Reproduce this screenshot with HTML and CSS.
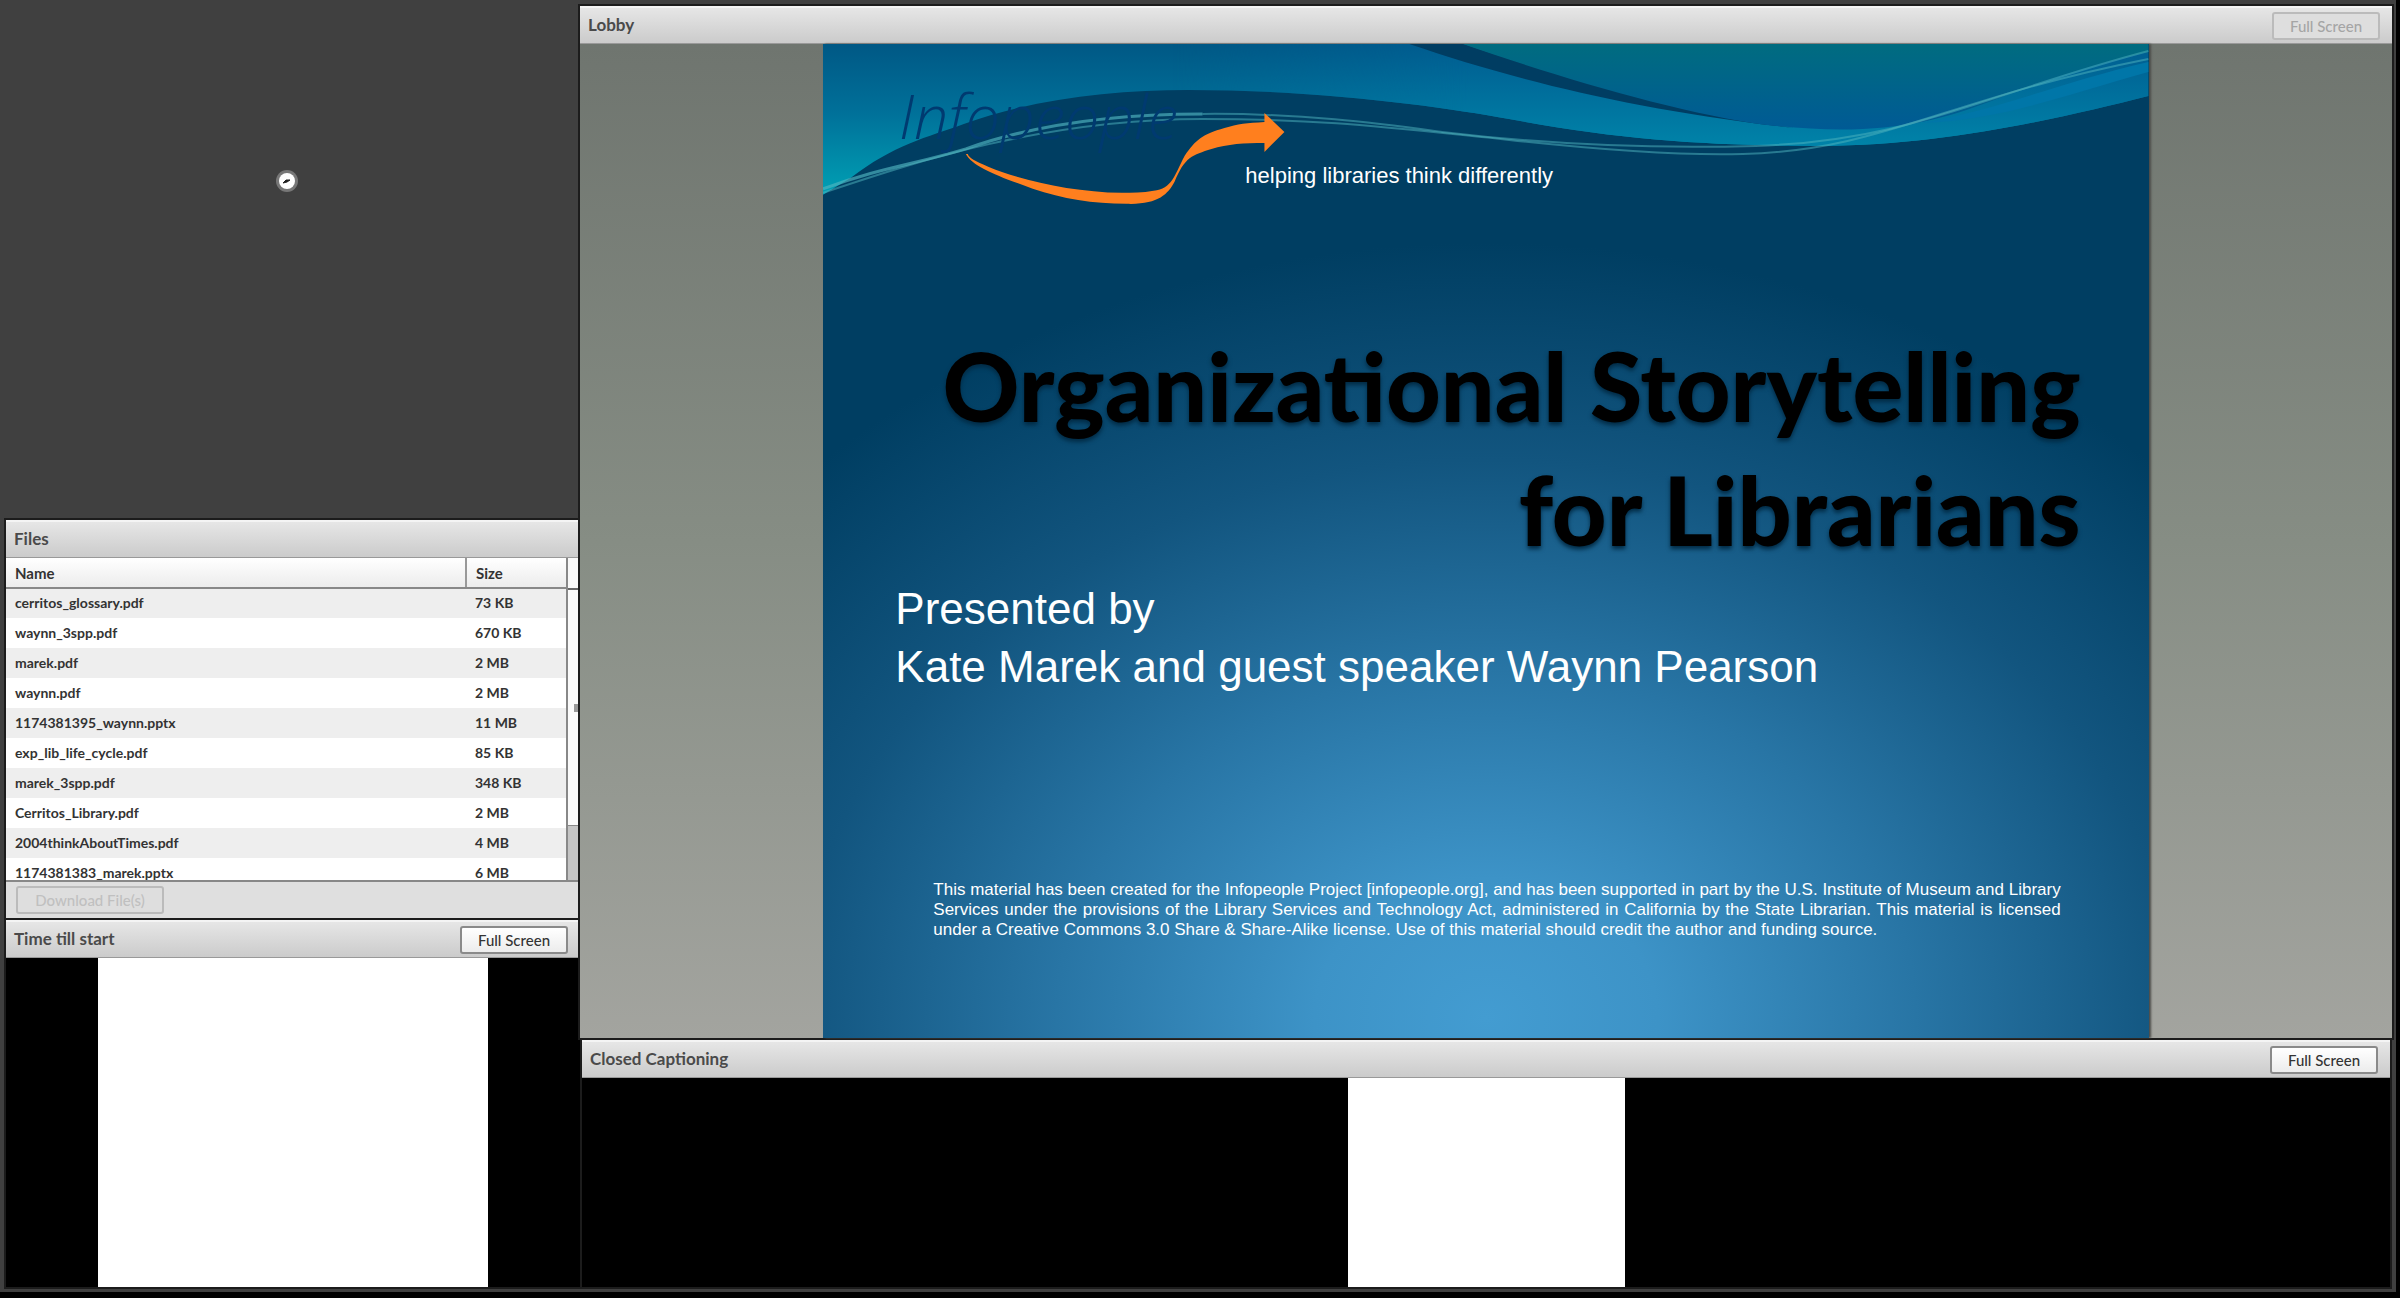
FILE: index.html
```
<!DOCTYPE html>
<html lang="en">
<head>
    <meta charset="UTF-8">
    <title>Lobby</title>
    <link rel="stylesheet" href="styles.css">
</head>
<body>
<div id="room">
    <div class="side">
        <div class="camera">
            <svg class="dial" viewBox="0 0 24 24">
                <circle cx="12" cy="12" r="11" fill="#777"/>
                <circle cx="12" cy="12" r="8" fill="#fff"/>
                <path d="M8 14l3-3 4 0-3 2z" fill="#222" stroke="#222"/>
            </svg>
        </div>
        <div class="pod files">
            <div class="bar"><h2>Files</h2></div>
            <div class="list">
                <table>
                    <thead>
                    <tr><th>Name</th><th class="size">Size</th></tr>
                    </thead>
                    <tbody>
                    <tr><td>cerritos_glossary.pdf</td><td>73 KB</td></tr>
                    <tr><td>waynn_3spp.pdf</td><td>670 KB</td></tr>
                    <tr><td>marek.pdf</td><td>2 MB</td></tr>
                    <tr><td>waynn.pdf</td><td>2 MB</td></tr>
                    <tr><td>1174381395_waynn.pptx</td><td>11 MB</td></tr>
                    <tr><td>exp_lib_life_cycle.pdf</td><td>85 KB</td></tr>
                    <tr><td>marek_3spp.pdf</td><td>348 KB</td></tr>
                    <tr><td>Cerritos_Library.pdf</td><td>2 MB</td></tr>
                    <tr><td>2004thinkAboutTimes.pdf</td><td>4 MB</td></tr>
                    <tr><td>1174381383_marek.pptx</td><td>6 MB</td></tr>
                    </tbody>
                </table>
                <div class="scroll">
                    <div class="corner"></div>
                    <div class="thumb"><i></i></div>
                </div>
            </div>
            <div class="foot"><button disabled>Download File(s)</button></div>
        </div>
        <div class="pod timer">
            <div class="bar"><h2>Time till start</h2><button>Full Screen</button></div>
            <div class="screen"><div class="blank"></div></div>
        </div>
    </div>
    <div class="main">
        <div class="pod lobby">
            <div class="bar"><h2>Lobby</h2><button disabled>Full Screen</button></div>
            <div class="stage">
                <div class="slide">
                    <svg class="art" viewBox="0 0 1327 995" preserveAspectRatio="none">
                        <defs>
                            <linearGradient id="sea" x1="0" y1="0" x2="0" y2="1">
                                <stop offset="0" stop-color="#005885"/>
                                <stop offset="0.45" stop-color="#007099"/>
                                <stop offset="1" stop-color="#00a0b4"/>
                            </linearGradient>
                            <linearGradient id="band" gradientUnits="userSpaceOnUse" x1="0" y1="0" x2="0" y2="100">
                                <stop offset="0" stop-color="#005c90"/>
                                <stop offset="1" stop-color="#0082a8"/>
                            </linearGradient>
                            <linearGradient id="fade" gradientUnits="userSpaceOnUse" x1="350" y1="0" x2="650" y2="0">
                                <stop offset="0" stop-color="#fff" stop-opacity="0"/>
                                <stop offset="1" stop-color="#fff"/>
                            </linearGradient>
                            <mask id="right"><rect width="1327" height="200" fill="url(#fade)"/></mask>
                            <linearGradient id="deep" x1="0" y1="0" x2="0" y2="1">
                                <stop offset="0" stop-color="#006c80"/>
                                <stop offset="1" stop-color="#005a95"/>
                            </linearGradient>
                        </defs>
                        <path fill="url(#sea)" d="M0 0V151L28 134C70 101 105 93 141 80C210 55 290 46 366 46C500 46 620 63 687 75C800 97 900 102 1000 102C1120 102 1240 74 1327 52V0Z"/>
                        <path fill="url(#band)" mask="url(#right)" d="M300 0V47L366 46C500 46 620 63 687 75C800 97 900 102 1000 102C1120 102 1240 74 1327 52V0Z"/>
                        <path fill="#003d62" d="M587 0C690 35 810 66 972 84C880 70 760 40 641 0Z"/>
                        <path fill="url(#deep)" d="M641 0C735 33 860 70 945 81C1050 93 1110 80 1170 57C1230 34 1280 18 1327 8V0Z"/>
                        <path fill="#0076a8" d="M1100 79C1180 65 1240 38 1327 18V28C1240 52 1180 76 1100 79Z"/>
                        <g fill="none" stroke="#50b5c0">
                            <path stroke-width="3" opacity="0.65" d="M0 145C60 123 90 121 143 105C210 81 290 70 380 70"/>
                            <path stroke-width="2" opacity="0.5" d="M380 70C480 69 560 80 620 88C720 100 830 105 934 102C1090 97 1160 51 1327 7"/>
                            <path stroke-width="2" opacity="0.5" d="M0 149C90 119 220 75 380 75C500 75 560 83 687 96C760 104 850 112 921 110C1060 107 1120 56 1327 15"/>
                        </g>
                        <path fill="#ff7f1e" d="M143 110C150 123 175 132 210 145C240 155 270 160 304 160C335 161 345 151 352 138C362 113 370 111 389 105C405 100 422 99 442 99V108L462 88L442 69V78C425 79 415 80 402 84C380 90 373 96 362 112C351 133 350 144 331 147C320 149 310 149 299 149C250 148 200 137 166 123C152 117 146 114 145 110Z"/>
                        <text class="logo" x="76" y="95">Infopeople</text>
                    </svg>
                    <p class="tagline">helping libraries think differently</p>
                    <h1>Organizational Storytelling<br>for Librarians</h1>
                    <p class="by">Presented by<br>Kate Marek and guest speaker Waynn Pearson</p>
                    <p class="credit">This material has been created for the Infopeople Project [infopeople.org], and has been supported in part by the U.S. Institute of Museum and Library Services under the provisions of the Library Services and Technology Act, administered in California by the State Librarian. This material is licensed under a Creative Commons 3.0 Share &amp; Share-Alike license. Use of this material should credit the author and funding source.</p>
                </div>
            </div>
        </div>
        <div class="pod captions">
            <div class="bar"><h2>Closed Captioning</h2><button>Full Screen</button></div>
            <div class="screen"><div class="blank"></div></div>
        </div>
    </div>
</div>
</body>
</html>
```
FILE: styles.css
```
*{
    margin: 0;
    padding: 0;
    box-sizing: border-box;
}
body{
    height: 100vh;
    padding: 0 4px 6px 0;
    background: #000;
    font-family: Lato, "Noto Sans", sans-serif;
    font-size: 14px;
    color: #333;
    overflow: hidden;
}
#room{
    height: 100%;
    display: grid;
    grid-template-columns: 580fr 1812fr;
    padding: 0 4px 5px 0;
    background: #404040;
}
.side,.main{
    display: flex;
    flex-direction: column;
    min-width: 0;
    min-height: 0;
}
.side{
    padding-left: 6px;
}
.main{
    padding-top: 6px;
}
.pod{
    display: flex;
    flex-direction: column;
    min-height: 0;
    box-shadow: 0 0 0 2px #1c1c1c;
}
.bar{
    flex: none;
    display: flex;
    justify-content: space-between;
    align-items: center;
    height: 38px;
    padding: 0 12px 0 8px;
    background: linear-gradient(#e6e6e6, #cbcbcb);
    border-top: 2px solid #f4f4f4;
    border-bottom: 1px solid #999;
}
.bar h2{
    padding-bottom: 2px;
    font-size: 17px;
    line-height: 20px;
    font-weight: 700;
    color: #4a4a4a;
}
button{
    width: 108px;
    height: 28px;
    border: 2px solid #8a8a8a;
    border-radius: 3px;
    background: linear-gradient(#fff, #ececec);
    font-family: inherit;
    font-size: 15px;
    font-weight: 500;
    color: #333;
}
button:disabled{
    border-color: #bbb;
    background: #dedede;
    color: #a5a5a5;
}

/* left column */
.camera{
    flex: 520;
    display: flex;
    justify-content: center;
    padding-right: 12px;
}
.dial{
    width: 24px;
    height: 24px;
    margin-top: 169px;
}
.files{
    flex: none;
    margin: 0 2px 2px 0;
}
.list{
    display: flex;
    height: 324px;
    overflow: hidden;
    background: #fff;
    border-bottom: 2px solid #888;
}
table{
    flex: 1;
    align-self: flex-start;
    border-collapse: collapse;
    table-layout: fixed;
}
th,td{
    height: 30px;
    padding: 0 0 2px 9px;
    text-align: left;
    font-weight: 700;
}
th{
    padding-bottom: 0;
    font-size: 15px;
    background: linear-gradient(#fff, #ececec);
    border-bottom: 2px solid #888;
}
.size{
    width: 100px;
    border-left: 2px solid #999;
}
tbody tr:nth-child(odd){
    background: #eee;
}
.scroll{
    display: flex;
    flex-direction: column;
    width: 12px;
    background: #c4c4c4;
    border-left: 2px solid #888;
}
.corner{
    height: 32px;
    background: #f8f8f8;
    border-bottom: 2px solid #666;
}
.thumb{
    display: flex;
    align-items: center;
    justify-content: flex-end;
    height: 236px;
    background: #fafafa;
    border-bottom: 1px solid #888;
}
.thumb i{
    width: 4px;
    height: 8px;
    background: #999;
}
.foot{
    height: 36px;
    padding: 4px 10px;
    background: #dfdfdf;
}
.foot button{
    width: 148px;
    color: #c0c0c0;
}
.timer{
    flex: 367;
}
.screen{
    flex: 1;
    display: flex;
    justify-content: center;
    background: #000;
}
.timer .blank{
    width: 68%;
    background: #fff;
}

/* slide */
.lobby{
    flex: 1032;
    margin-bottom: 2px;
}
.stage{
    flex: 1;
    display: flex;
    justify-content: center;
    min-height: 0;
    background: linear-gradient(#6f756f, #868d84 50%, #a3a49f);
}
.slide{
    position: relative;
    height: 100%;
    aspect-ratio: 4 / 3;
    padding: 117px 68px 0 70px;
    background: radial-gradient(ellipse 72% 78% at 50% 98%, #439cd1, #3d93c7 18%, #2875a5 45%, #12557f 72%, #003e62);
    box-shadow: 2px 0 2px #4c4c48;
    font-family: "Liberation Sans", Arial, sans-serif;
    color: #fff;
}
.art{
    position: absolute;
    left: 0;
    top: 0;
    width: 100%;
    height: 100%;
}
.logo{
    font-family: "Open Sans", sans-serif;
    font-size: 61px;
    font-style: italic;
    font-weight: 300;
    fill: #003a70;
}
.tagline,h1,.by,.credit{
    position: relative;
}
.tagline{
    padding-left: 352px;
    font-size: 22px;
    line-height: 30px;
}
h1{
    margin-top: 132px;
    font-family: Lato, sans-serif;
    font-size: 95px;
    line-height: 124px;
    font-weight: 900;
    text-align: right;
    color: #000;
    white-space: nowrap;
    text-shadow: 0 3px 4px #022b45;
}
.by{
    padding-left: 2px;
    margin-top: 9px;
    font-size: 44px;
    line-height: 58px;
}
.credit{
    margin-top: 184px;
    padding: 0 20px 0 40px;
    font-size: 17px;
    line-height: 20px;
    text-align: justify;
}
.captions{
    flex: 247;
    margin: 0 2px;
}
.captions .blank{
    width: 277px;
    background: #fff;
}
```
